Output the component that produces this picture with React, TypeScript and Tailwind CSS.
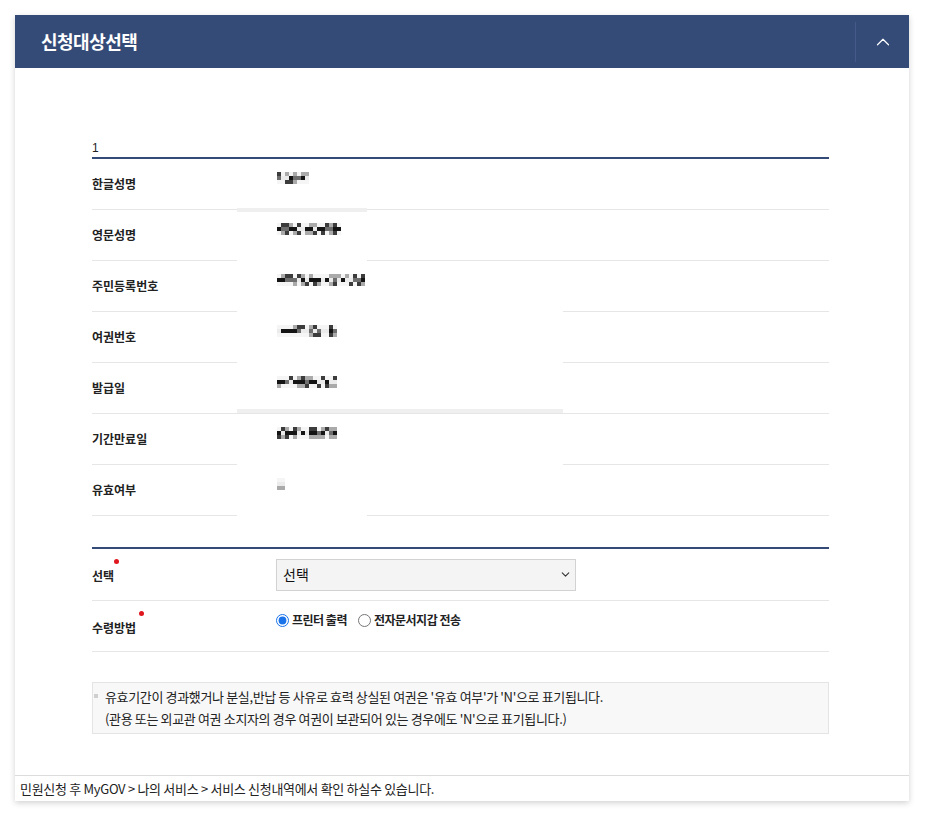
import { ChevronDown, ChevronUp } from "lucide-react";

const rows = [
  { label: "한글성명", w: 8, seed: 3, patch: "gray-short" },
  { label: "영문성명", w: 16, seed: 7, patch: "white-short" },
  { label: "주민등록번호", w: 22, seed: 11, patch: "white-long" },
  { label: "여권번호", w: 15, seed: 5, patch: "white-long" },
  { label: "발급일", w: 15, seed: 13, patch: "gray-long" },
  { label: "기간만료일", w: 15, seed: 17, patch: "white-long" },
  { label: "유효여부", w: 2, seed: 19, patch: "white-short" },
];

// 가려진 값 (모자이크)
function Mosaic({ w, seed }: { w: number; seed: number }) {
  let s = seed * 9301 + 49297;
  const rnd = () => {
    s = (s * 9301 + 49297) % 233280;
    return s / 233280;
  };
  const cells = Array.from({ length: w * 3 }, (_, i) => {
    const r = rnd();
    const row = Math.floor(i / w);
    const v = row === 1 ? (r < 0.45 ? 20 : r < 0.7 ? 110 : 235) : r < 0.25 ? 60 : r < 0.5 ? 170 : 245;
    return `rgb(${v},${v},${v})`;
  });
  return (
    <div className="grid" style={{ gridTemplateColumns: `repeat(${w}, 4px)` }}>
      {cells.map((c, i) => (
        <div key={i} className="h-[4px] w-[4px]" style={{ background: c }} />
      ))}
    </div>
  );
}

function Patch({ kind }: { kind: string }) {
  if (kind === "gray-short") return <div className="absolute left-[145px] bottom-[-3px] h-[4px] w-[130px] bg-[#efefef]" />;
  if (kind === "gray-long") return <div className="absolute left-[145px] bottom-[0px] h-[4px] w-[326px] bg-[#efefef]" />;
  if (kind === "white-short") return <div className="absolute left-[145px] bottom-[-1px] h-[2px] w-[130px] bg-white" />;
  return <div className="absolute left-[145px] bottom-[-1px] h-[2px] w-[326px] bg-white" />;
}

export default function App() {
  return (
    <div className="min-h-[814px] bg-white pt-[15px] font-['Noto_Sans_CJK_KR','Noto_Sans',sans-serif] text-[#222]">
      <div className="mx-[15px] w-[894px] bg-white shadow-[0_2px_6px_rgba(0,0,0,0.18)]">
        {/* 헤더 */}
        <div className="flex h-[53px] items-center justify-between bg-[#344b78]">
          <h2 className="pl-[26px] text-[18px] font-bold tracking-[-0.5px] text-white">신청대상선택</h2>
          <button className="flex h-[40px] w-[54px] items-center justify-center border-l border-[#46598a] text-white">
            <ChevronUp size={22} strokeWidth={1.3} />
          </button>
        </div>

        {/* 본문 */}
        <div className="pl-[77px] pr-[80px] pt-[72px] pb-[41px]">
          <div className="h-[17px] text-[12px] leading-[17px] font-['Liberation_Sans',sans-serif]">1</div>
          <div className="h-[2px] bg-[#344b78]" />
          {rows.map((r) => (
            <div key={r.label} className="relative flex h-[51px] border-b border-[#e6e6e6]">
              <div className="flex w-[185px] items-center text-[12px] font-bold">{r.label}</div>
              <div className="pt-[13px]">
                <Mosaic w={r.w} seed={r.seed} />
              </div>
              <Patch kind={r.patch} />
            </div>
          ))}

          <div className="mt-[31px] h-[2px] bg-[#344b78]" />
          <div className="flex h-[52px] items-center border-b border-[#e6e6e6]">
            <div className="relative w-[184px] pt-[2px] text-[12px] font-bold">
              <span className="relative">
                선택
                <span className="absolute right-[-5px] top-[-8px] h-[5px] w-[5px] rounded-full bg-[#e0161e]" />
              </span>
            </div>
            <div className="relative h-[32px] w-[300px]">
              <select className="h-full w-full appearance-none border border-[#d2d2d2] bg-[#f4f4f4] pl-[6px] text-[14px] text-[#111] outline-none">
                <option>선택</option>
              </select>
              <ChevronDown size={13} strokeWidth={2} className="pointer-events-none absolute right-[4px] top-[9px] text-[#333]" />
            </div>
          </div>
          <div className="flex h-[51px] items-center border-b border-[#e6e6e6]">
            <div className="w-[184px] pt-[4px] text-[12px] font-bold">
              <span className="relative">
                수령방법
                <span className="absolute right-[-8px] top-[-8px] h-[5px] w-[5px] rounded-full bg-[#e0161e]" />
              </span>
            </div>
            <div className="flex items-center pb-[12px] text-[12px] font-bold tracking-[-0.5px]">
              <label className="flex items-center">
                <input type="radio" name="recv" defaultChecked className="m-0 h-[13px] w-[13px] accent-[#1a73e8]" />
                <span className="ml-[3px]">프린터 출력</span>
              </label>
              <label className="ml-[11px] flex items-center">
                <input type="radio" name="recv" className="m-0 h-[13px] w-[13px]" />
                <span className="ml-[3px]">전자문서지갑 전송</span>
              </label>
            </div>
          </div>

          <div className="mt-[30px] flex border border-[#e4e4e4] bg-[#f8f8f8] py-[3px] pl-[1px] pr-[10px] text-[13px] leading-[22px] tracking-[-0.35px] text-[#222]">
            <span className="mt-[8px] mr-[7px] h-[4px] w-[4px] shrink-0 bg-[#cfcfcf]" />
            <p>
              유효기간이 경과했거나 분실,반납 등 사유로 효력 상실된 여권은 '유효 여부'가 'N'으로 표기됩니다.
              <br />
              (관용 또는 외교관 여권 소지자의 경우 여권이 보관되어 있는 경우에도 'N'으로 표기됩니다.)
            </p>
          </div>
        </div>

        {/* 하단 안내 */}
        <div className="border-t border-[#dcdcdc] py-[3px] pl-[5px] text-[13px] leading-[19px] tracking-[-0.3px] text-[#222]">
          민원신청 후 MyGOV &gt; 나의 서비스 &gt; 서비스 신청내역에서 확인 하실수 있습니다.
        </div>
      </div>
    </div>
  );
}
